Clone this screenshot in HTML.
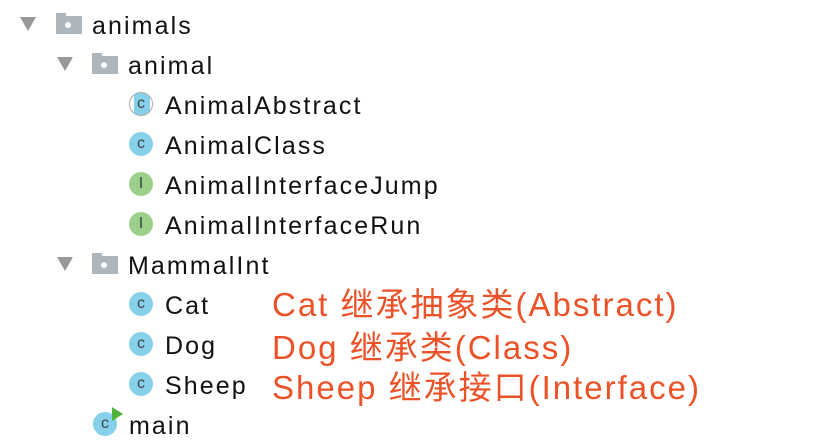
<!DOCTYPE html>
<html><head><meta charset="utf-8"><style>
body{margin:0;width:834px;height:448px;background:#fff;overflow:hidden;position:relative;font-family:"Liberation Sans","Noto Sans CJK SC",sans-serif}
.r{position:absolute;height:40px;line-height:40px;font-size:25px;letter-spacing:2.1px;color:#111;white-space:nowrap;margin-top:2px}
.tri{position:absolute;width:0;height:0;border-left:8px solid transparent;border-right:8px solid transparent;border-top:14px solid #999}
.fold{position:absolute;width:26px;height:18px;background:#aeb6bd}
.fold:before{content:"";position:absolute;left:0;top:-3px;width:10px;height:4px;background:#aeb6bd}
.fold:after{content:"";position:absolute;left:9px;top:6px;width:6px;height:6px;border-radius:50%;background:#fff}
.ic{position:absolute;width:24px;height:24px;border-radius:50%;background:#86d0ea;color:#3a4450;font-size:16px;line-height:24px;text-align:center;letter-spacing:0}
.ic.i{background:#9bd08a}
.red{position:absolute;left:272px;font-size:33px;color:#ec5228;letter-spacing:2px;white-space:nowrap;line-height:40px}
</style></head><body>
<div class="tri" style="left:20px;top:17px"></div>
<div class="fold" style="left:56px;top:16px"></div>
<div class="r" style="left:92px;top:4px">animals</div>
<div class="tri" style="left:57px;top:57px"></div>
<div class="fold" style="left:92px;top:56px"></div>
<div class="r" style="left:128px;top:44px">animal</div>
<div class="ic" style="left:129px;top:92px;background:linear-gradient(90deg,#fff 0 4px,#86d0ea 4px 20px,#fff 20px);border:1px solid #aaa;width:22px;height:22px;line-height:22px">c</div>
<div class="r" style="left:165px;top:84px">AnimalAbstract</div>
<div class="ic" style="left:129px;top:132px">c</div>
<div class="r" style="left:165px;top:124px">AnimalClass</div>
<div class="ic i" style="left:129px;top:172px">I</div>
<div class="r" style="left:165px;top:164px">AnimalInterfaceJump</div>
<div class="ic i" style="left:129px;top:212px">I</div>
<div class="r" style="left:165px;top:204px">AnimalInterfaceRun</div>
<div class="tri" style="left:57px;top:257px"></div>
<div class="fold" style="left:92px;top:256px"></div>
<div class="r" style="left:128px;top:244px">MammalInt</div>
<div class="ic" style="left:129px;top:292px">c</div>
<div class="r" style="left:165px;top:284px">Cat</div>
<div class="ic" style="left:129px;top:332px">c</div>
<div class="r" style="left:165px;top:324px">Dog</div>
<div class="ic" style="left:129px;top:372px">c</div>
<div class="r" style="left:165px;top:364px">Sheep</div>
<div class="ic" style="left:93px;top:412px">c</div>
<svg style="position:absolute;left:110px;top:406px" width="14" height="16"><path d="M2 1 L13 8 L2 15 Z" fill="#4fb33a"/></svg>
<div class="r" style="left:129px;top:404px">main</div>
<div class="red" style="top:285px">Cat 继承抽象类(Abstract)</div>
<div class="red" style="top:328px">Dog 继承类(Class)</div>
<div class="red" style="top:368px">Sheep 继承接口(Interface)</div>
</body></html>
